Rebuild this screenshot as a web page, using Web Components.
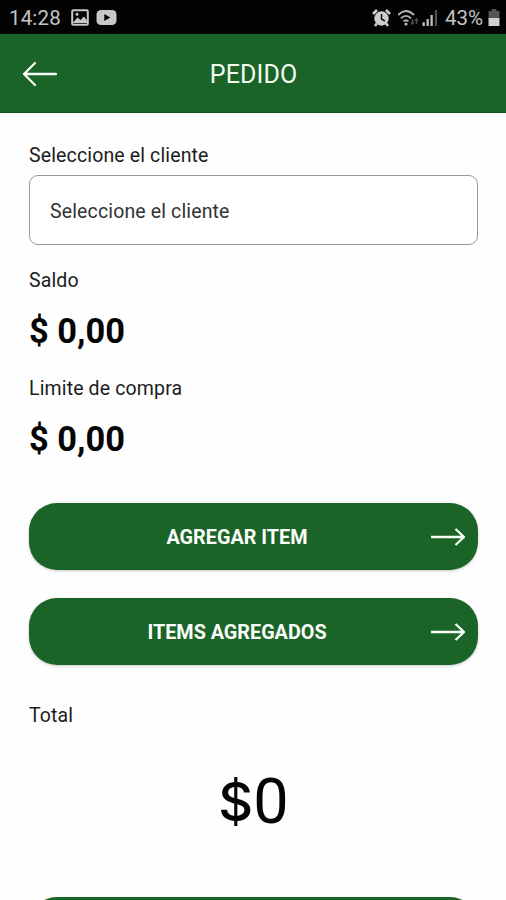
<!DOCTYPE html>
<html lang="es">
<head>
<meta charset="utf-8">
<meta name="viewport" content="width=device-width">
<title>Pedido</title>
<style>
html, body { margin: 0; height: 900px; overflow: hidden; background: #fefefe; font-family: Roboto, "Liberation Sans", sans-serif; }
</style>
</head>
<body>
<order-screen></order-screen>
<script>
const define = (name, html) => {
  const template = document.createElement('template');
  template.innerHTML = html;
  customElements.define(name, class extends HTMLElement {
    constructor() {
      super();
      this.attachShadow({ mode: 'open' }).append(template.content.cloneNode(true));
    }
  });
};

define('status-bar', `
<style>
:host { display: flex; flex: none; align-items: center; box-sizing: border-box; height: 34px; padding: 1px 6px 0 9px; background: #030303; color: #c3c3c3; font-size: 20.5px; line-height: 34px; }
svg { display: block; flex: none; }
.time { width: 62px; letter-spacing: .15px; }
.pct { margin-left: 6px; width: 43px; font-size: 20.5px; letter-spacing: 0; white-space: nowrap; }
.gap { flex: 1; }
</style>
<span class="time">14:28</span>
<svg width="18" height="17" viewBox="0 0 18 17"><rect x="1.2" y="1.2" width="15.6" height="14.6" rx="1" fill="none" stroke="#c8c8c8" stroke-width="2"/><path d="M2 13.5 6.5 8.5 9.5 11 13 7.5 16 11.5V14H2z" fill="#c8c8c8"/><circle cx="6" cy="5.3" r="1.5" fill="#c8c8c8"/></svg>
<svg style="margin-left:7px" width="22" height="17" viewBox="0 0 22 17"><rect x=".5" y="1" width="20" height="15" rx="4.5" fill="#c8c8c8"/><path d="M8.3 5v7l6-3.5z" fill="#030303"/></svg>
<span class="gap"></span>
<svg style="margin-right:1px" width="19" height="18" viewBox="0 0 19 18"><circle cx="9.5" cy="9.5" r="7.2" fill="#cfcfcf"/><path d="M1 5 5 1M18 5 14 1M4.8 14.5 3 17M14.2 14.5 16 17" stroke="#cfcfcf" stroke-width="2.6"/><path d="M9.5 5v5l3.4 2" fill="none" stroke="#111" stroke-width="1.5"/></svg>
<svg style="margin-left:6px" width="22" height="18" viewBox="0 0 22 18"><g fill="none" stroke="#b5b5b5" stroke-width="1.8"><path d="M0 6Q8-2 16 6"/><path d="M2.9 9.4Q8 4.2 13.1 9.4"/><path d="M5.5 12.4Q8 10 10.5 12.4"/></g><circle cx="8" cy="15" r="1.6" fill="#b5b5b5"/><path d="M14.5 10v5M12.8 13.2l1.7 2 1.7-2M18.5 15v-5M16.8 11.8l1.7-2 1.7 2" stroke="#4c4c4c" stroke-width="1.3" fill="none"/></svg>
<svg style="margin-left:2px" width="17" height="18" viewBox="0 0 17 18"><path d="M.5 13.2h2.3V17H.5zM4.5 10h2.3v7H4.5zM8.5 6h2.3v11H8.5z" fill="#bdbdbd"/><path d="M12.8 1h2.3v16h-2.3z" fill="#505050"/></svg>
<span class="pct">43%</span>
<svg width="12" height="19" viewBox="0 0 12 19"><path d="M3.5 1h5v2H11.5v7H.5V3h3z" fill="#555"/><path d="M.5 10h11v8H.5z" fill="#d0d0d0"/></svg>
`);

define('app-header', `
<style>
:host { display: grid; flex: none; grid-template-columns: 80px 1fr 80px; align-items: center; box-sizing: border-box; height: 79px; border-bottom: 1px solid #11501b; background: #1b6427; color: #f4fbf2; }
svg { display: block; margin: 1px 0 0 22px; }
.title { text-align: center; font-size: 25px; line-height: 28px; padding: 4px 0 0 1px; letter-spacing: .1px; }
</style>
<svg width="36" height="28" viewBox="0 0 36 28"><path d="M34 14H2M13 3 2 14l11 11" fill="none" stroke="#f7fcf5" stroke-width="2.3" stroke-linecap="round" stroke-linejoin="round"/></svg>
<span class="title"><slot></slot></span>
`);

define('field-label', `
<style>
:host { display: block; height: 24px; line-height: 24px; font-size: 19.5px; letter-spacing: .14px; color: #1c1c1c; }
</style><slot></slot>`);

define('select-box', `
<style>
:host { display: flex; align-items: center; box-sizing: border-box; height: 70px; padding: 2px 20px 0; border: 1px solid #999; border-radius: 9px; background: #fff; font-size: 19.5px; letter-spacing: .14px; color: #333; }
</style><slot></slot>`);

define('money-value', `
<style>
:host { display: block; height: 40px; line-height: 40px; font-size: 34.4px; font-weight: 700; color: #050505; }
</style><slot></slot>`);

define('action-button', `
<style>
:host { display: grid; grid-template-columns: 48px 1fr 48px; align-items: center; box-sizing: border-box; height: 67px; border-radius: 28px; background: #1b6427; box-shadow: 0 1px 3px rgba(0,0,0,.22); color: #fbfefa; font-size: 19.8px; font-weight: 700; }
.text { grid-column: 2; text-align: center; padding: 2px 33px 0 0; white-space: nowrap; }
svg { display: block; }
</style>
<span class="text"><slot></slot></span>
<svg width="36" height="20" viewBox="0 0 36 20"><path d="M1 10h33M25.5 2l8.5 8-8.5 8" fill="none" stroke="#f7fcf5" stroke-width="2.4" stroke-linejoin="round"/></svg>
`);

define('order-screen', `
<style>
:host { display: flex; flex-direction: column; height: 900px; overflow: hidden; }
main { display: flex; flex-direction: column; padding: 31px 28px 0 29px; }
select-box { margin-top: 7px; }
.saldo { margin-top: 24px; }
money-value { margin-top: 18px; }
.limit { margin-top: 26px; }
.first { margin-top: 44px; }
.second { margin-top: 28px; }
.total { margin-top: 39px; }
.amount { margin-top: 38px; height: 72px; line-height: 72px; font-size: 63px; text-align: center; color: #050505; }
.amount::first-letter { font-family: Inter, sans-serif; font-size: 54px; font-weight: 500; line-height: 0; vertical-align: 2px; }
.last { margin-top: 59px; }
</style>
<status-bar></status-bar>
<app-header>PEDIDO</app-header>
<main>
<field-label>Seleccione el cliente</field-label>
<select-box>Seleccione el cliente</select-box>
<field-label class="saldo">Saldo</field-label>
<money-value>$ 0,00</money-value>
<field-label class="limit">Limite de compra</field-label>
<money-value>$ 0,00</money-value>
<action-button class="first">AGREGAR ITEM</action-button>
<action-button class="second">ITEMS AGREGADOS</action-button>
<field-label class="total">Total</field-label>
<div class="amount">$0</div>
<action-button class="last"></action-button>
</main>
`);
</script>
</body>
</html>
